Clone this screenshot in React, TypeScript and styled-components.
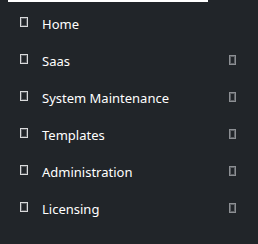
import React from "react";
import styled, { createGlobalStyle } from "styled-components";

const Global = createGlobalStyle`
  html, body {
    margin: 0;
    padding: 0;
    background: #212529;
  }
  body {
    font-family: "Segoe UI", "Noto Sans", "Open Sans", sans-serif;
  }
`;

const Sidebar = styled.nav`
  width: 258px;
  height: 244px;
  background: #212529;
  display: flex;
  flex-direction: column;
  overflow: hidden;
`;

const TopBar = styled.div`
  width: 200px;
  height: 2px;
  margin-left: 8px;
  background: #ffffff;
  flex: none;
`;

const Menu = styled.ul`
  list-style: none;
  margin: 0;
  padding: 3px 0 0 0;
  display: flex;
  flex-direction: column;
`;

const Item = styled.li`
  height: 37px;
  display: flex;
  align-items: center;
  padding: 0 22px 0 20px;
  color: #ffffff;
  font-size: 13px;
  line-height: 18px;
`;

const Glyph = styled.span<{ $muted?: boolean }>`
  flex: none;
  box-sizing: border-box;
  width: ${(p) => (p.$muted ? "7px" : "8px")};
  height: 10px;
  margin-top: ${(p) => (p.$muted ? "-1px" : "-4px")};
  border: 1px solid ${(p) => (p.$muted ? "#8c8f93" : "#d9dadb")};
  box-shadow: inset 0 0 0 1px ${(p) => (p.$muted ? "#5d6064" : "#55585c")};
`;

const Label = styled.span`
  margin-left: 14px;
  white-space: nowrap;
`;

const Chevron = styled(Glyph)`
  margin-left: auto;
`;

const items: { label: string; sub: boolean }[] = [
  { label: "Home", sub: false },
  { label: "Saas", sub: true },
  { label: "System Maintenance", sub: true },
  { label: "Templates", sub: true },
  { label: "Administration", sub: true },
  { label: "Licensing", sub: true },
];

export default function App() {
  return (
    <>
      <Global />
      <Sidebar>
        <TopBar />
        <Menu>
          {items.map((it) => (
            <Item key={it.label}>
              <Glyph />
              <Label>{it.label}</Label>
              {it.sub && <Chevron $muted />}
            </Item>
          ))}
        </Menu>
      </Sidebar>
    </>
  );
}
